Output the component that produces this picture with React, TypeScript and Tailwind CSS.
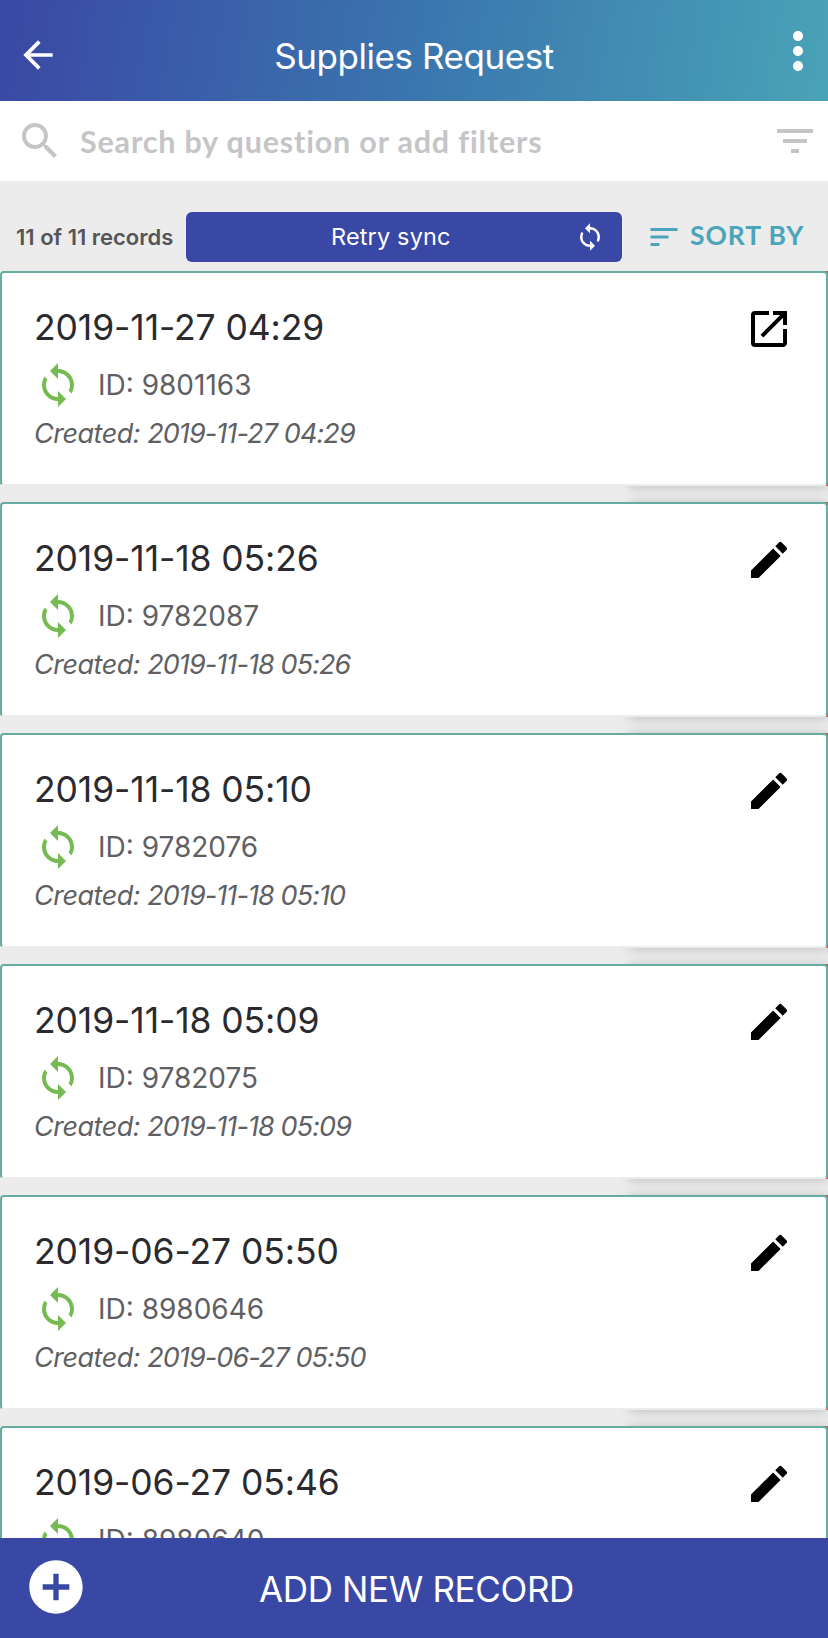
import {
  MdAddCircle,
  MdArrowBack,
  MdEdit,
  MdFilterList,
  MdMoreVert,
  MdOpenInNew,
  MdSearch,
  MdSort,
  MdSync,
} from "react-icons/md";

type RecordItem = {
  id: string;
  date: string;
  submitted?: boolean;
};

const records: RecordItem[] = [
  { id: "9801163", date: "2019-11-27 04:29", submitted: true },
  { id: "9782087", date: "2019-11-18 05:26" },
  { id: "9782076", date: "2019-11-18 05:10" },
  { id: "9782075", date: "2019-11-18 05:09" },
  { id: "8980646", date: "2019-06-27 05:50" },
  { id: "8980640", date: "2019-06-27 05:46" },
];

function RecordCard({ id, date, submitted }: RecordItem) {
  const Action = submitted ? MdOpenInNew : MdEdit;
  return (
    <div className="relative h-[215px] shrink-0">
      {/* Swipe action hidden behind the card */}
      <div className="absolute inset-y-0 right-0 w-[199px] bg-[#d9435a] shadow-[0_1px_11px_rgba(0,0,0,0.2)]" />
      <div className="relative flex h-full justify-between rounded-[4px] border-2 border-[#66aca1] border-b-[#ececec] bg-white px-[33px]">
        <div className="flex flex-col">
          <h2 className="-ml-px mt-[33px] h-[44px] whitespace-nowrap text-[35.5px] leading-[44px] tracking-[-0.1px] text-[#2a2a2f]">
            {date}
          </h2>
          <div className="-ml-px mt-[11px] flex h-12 items-center">
            <MdSync className="size-12 text-[#75bb51]" />
            <span className="ml-[16px] whitespace-nowrap text-[28px] leading-9 text-[#606063]">ID: {id}</span>
          </div>
          <p className="-ml-px mt-[7px] whitespace-nowrap text-[27px] italic leading-9 tracking-[-0.5px] text-[#606063]">
            Created: <span className="tracking-[-0.9px]">{date}</span>
          </p>
        </div>
        <Action className="mt-[32px] size-12 text-black" />
      </div>
    </div>
  );
}

export default function App() {
  return (
    <div className="flex h-[1638px] w-[828px] flex-col overflow-hidden bg-[#ececec] font-['Inter',sans-serif]">
      <header className="flex h-[101px] shrink-0 items-center justify-between bg-linear-[100deg] from-[#3a48a5] via-[#3a75ae] to-[#49a3b7] pl-4">
        <MdArrowBack className="mt-[9px] size-11 text-white" />
        <h1 className="mt-[12px] text-[35px] tracking-[-0.45px] text-white">Supplies Request</h1>
        <MdMoreVert className="size-[60px] text-white" />
      </header>

      <div className="flex h-20 shrink-0 items-center bg-white pl-4 pr-[9px] text-[#c5c5c7]">
        <MdSearch className="size-12" />
        <span className="ml-4 mt-[2px] flex-1 font-['Lato',sans-serif] text-[30.5px] font-bold tracking-[0.82px]">
          Search by question or add filters
        </span>
        <MdFilterList className="size-12" />
      </div>

      <div className="flex h-[90px] shrink-0 items-center pt-[22px]">
        <span className="w-[186px] whitespace-nowrap pl-4 pt-px text-[22px] font-semibold text-[#555558]">
          11 of 11 records
        </span>
        <button className="flex h-[50px] w-[436px] items-center rounded-[6px] bg-[#3948a5] pr-[17px] pl-[145px] text-white">
          <span className="flex-1 text-left text-[23.5px] tracking-[0.15px]">Retry sync</span>
          <MdSync className="size-[30px]" />
        </button>
        <div className="ml-[24px] flex items-center text-[#4aa5bb]">
          <MdSort className="size-9" />
          <span className="-mt-[2px] ml-[8px] whitespace-nowrap font-['Lato',sans-serif] text-[26.5px] font-bold tracking-[0.9px]">
            SORT BY
          </span>
        </div>
      </div>

      <main className="flex min-h-0 flex-1 flex-col gap-4 overflow-hidden">
        {records.map((record) => (
          <RecordCard key={record.id} {...record} />
        ))}
      </main>

      <footer className="flex h-[100px] shrink-0 items-center bg-[#3948a5] px-6 text-white">
        <MdAddCircle className="-mt-[2px] size-16" />
        <span className="flex-1 pr-[59px] pt-[2px] text-center text-[35px] tracking-[-0.35px]">ADD NEW RECORD</span>
      </footer>
    </div>
  );
}
